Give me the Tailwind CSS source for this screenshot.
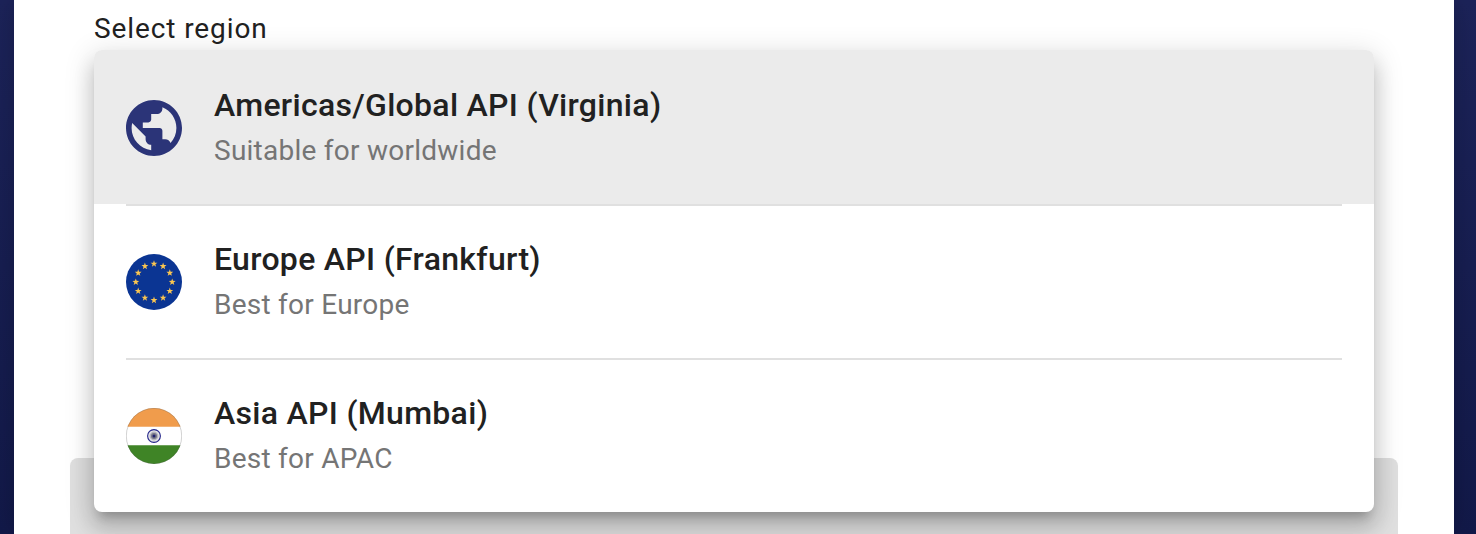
<!DOCTYPE html>
<html lang="en">
<head>
<meta charset="utf-8">
<title>Select region</title>
<script src="https://cdn.jsdelivr.net/npm/@tailwindcss/browser@4"></script>
</head>
<body class="h-[534px] overflow-hidden bg-linear-to-b from-[#1c2359] to-[#121949] px-[14px] pr-[22px] font-['Roboto',sans-serif] text-[#212121]">
<main class="relative h-[534px] bg-white px-14 shadow-[0_0_24px_rgba(0,0,0,0.2)]">
  <div class="flex h-[458px] items-start px-6 pt-[9px]">
    <h1 class="text-[28px] leading-[40px] tracking-[0.9px] whitespace-nowrap">Select region</h1>
  </div>
  <div class="h-[90px] rounded-lg bg-[#dfdfdf]"></div>
  <ul class="absolute top-[50px] left-20 w-[1280px] overflow-hidden rounded-lg bg-white shadow-[0_10px_10px_-6px_rgba(0,0,0,0.2),0_16px_20px_2px_rgba(0,0,0,0.14),0_6px_28px_4px_rgba(0,0,0,0.12)]">
    <li class="flex h-[154px] items-center gap-8 bg-[#ebebeb] px-8 pt-0.5">
      <svg class="size-14 shrink-0" viewBox="2 2 20 20" fill="#2b3478"><path d="M12 2C6.48 2 2 6.48 2 12s4.48 10 10 10 10-4.48 10-10S17.52 2 12 2zm-1 17.93c-3.95-.49-7-3.85-7-7.93 0-.62.08-1.21.21-1.79L9 15v1c0 1.1.9 2 2 2v1.93zm6.9-2.54c-.26-.81-1-1.39-1.9-1.39h-1v-3c0-.55-.45-1-1-1H8v-2h2c.55 0 1-.45 1-1V7h2c1.1 0 2-.9 2-2v-.41c2.93 1.19 5 4.06 5 7.41 0 2.08-.8 3.97-2.1 5.39z"/></svg>
      <div class="pb-[3px] whitespace-nowrap">
        <p class="text-[32px] leading-[48px] font-medium tracking-[0.3px]">Americas/Global API (Virginia)</p>
        <p class="mt-px text-[28px] leading-[42px] tracking-[0.25px] text-[#757575]">Suitable for worldwide</p>
      </div>
    </li>
    <li class="px-8">
      <div class="flex h-[154px] items-center gap-8 border-t-2 border-[#e0e0e0]">
        <svg class="size-14 shrink-0" viewBox="-28 -28 56 56">
          <defs><path id="star" d="M0-3.6.85-1.15 3.4-1.1 1.4.5 2.1 2.95 0 1.5-2.1 2.95-1.4.5-3.4-1.1-.85-1.15z"/></defs>
          <circle r="28" fill="#0b3593"/>
          <g fill="#fbc650">
            <use href="#star" y="-18.2"/><use href="#star" x="9.1" y="-15.8"/><use href="#star" x="15.8" y="-9.1"/>
            <use href="#star" x="18.2"/><use href="#star" x="15.8" y="9.1"/><use href="#star" x="9.1" y="15.8"/>
            <use href="#star" y="18.2"/><use href="#star" x="-9.1" y="15.8"/><use href="#star" x="-15.8" y="9.1"/>
            <use href="#star" x="-18.2"/><use href="#star" x="-15.8" y="-9.1"/><use href="#star" x="-9.1" y="-15.8"/>
          </g>
        </svg>
        <div class="pb-[3px] whitespace-nowrap">
          <p class="text-[32px] leading-[48px] font-medium tracking-[0.3px]">Europe API (Frankfurt)</p>
          <p class="mt-px text-[28px] leading-[42px] tracking-[0.25px] text-[#757575]">Best for Europe</p>
        </div>
      </div>
    </li>
    <li class="px-8">
      <div class="flex h-[154px] items-center gap-8 border-t-2 border-[#e0e0e0]">
        <svg class="size-14 shrink-0" viewBox="-28 -28 56 56">
          <defs><clipPath id="disc"><circle r="28"/></clipPath></defs>
          <g clip-path="url(#disc)">
            <path fill="#fff" d="M-28-28h56v56h-56z"/>
            <path fill="#f09c4c" d="M-28-28h56v18.7h-56z"/>
            <path fill="#3f8426" d="M-28 9.3h56V28h-56z"/>
          </g>
          <circle r="27.7" fill="none" stroke="#555" stroke-opacity=".45" stroke-width=".6"/>
          <circle r="6.4" fill="#e4e4e8" stroke="#24258a" stroke-width="1.1"/>
          <circle r="4.4" fill="#b5b5bd"/>
          <circle r="3" fill="#777788"/>
          <circle r="1.5" fill="#20226f"/>
        </svg>
        <div class="pb-[3px] whitespace-nowrap">
          <p class="text-[32px] leading-[48px] font-medium tracking-[0.3px]">Asia API (Mumbai)</p>
          <p class="mt-px text-[28px] leading-[42px] tracking-[0.25px] text-[#757575]">Best for APAC</p>
        </div>
      </div>
    </li>
  </ul>
</main>
</body>
</html>
